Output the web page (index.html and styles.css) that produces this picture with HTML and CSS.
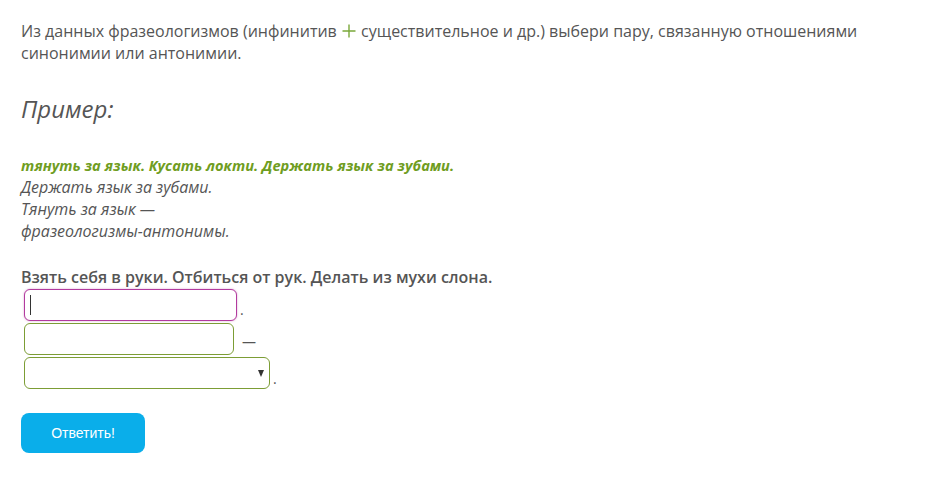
FILE: index.html
```html
<!DOCTYPE html>
<html lang="ru">
<head>
<meta charset="utf-8">
<link rel="stylesheet" href="styles.css">
</head>
<body>
<div class="task">
  <p class="question">Из данных фразеологизмов (инфинитив <svg class="plus" width="14" height="14" viewBox="0 0 14 14" aria-label="+"><path d="M7 0.5V13.5M0.5 7H13.5" stroke="#7aa83a" stroke-width="1.4" fill="none"/></svg> существительное и др.) выбери пару, связанную отношениями синонимии или антонимии.</p>
  <h2 class="example-title">Пример:</h2>
  <div class="example">
    <div class="example-src">тянуть за язык. Кусать локти. Держать язык за зубами.</div>
    <div>Держать язык за зубами.</div>
    <div>Тянуть за язык —</div>
    <div>фразеологизмы-антонимы.</div>
  </div>
  <div class="prompt">Взять себя в руки. Отбиться от рук. Делать из мухи слона.</div>
  <div class="answers">
    <div class="row"><div class="focus-wrap"><input class="field field-focus" type="text"><span class="caret"></span></div><span class="punct dot">.</span></div>
    <div class="row"><input class="field field-2" type="text"><span class="punct dash">—</span></div>
    <div class="row"><div class="select"><span class="arrow"></span></div><span class="punct dot2">.</span></div>
  </div>
  <button class="submit">Ответить!</button>
</div>
</body>
</html>
```
FILE: styles.css
```css
html, body { margin: 0; padding: 0; background: #fff; }
body { font-family: "Open Sans", "DejaVu Sans", sans-serif; color: #555; }
.task { padding: 20px 0 0 21px; }
.question { margin: 0; font-size: 16px; line-height: 22px; width: 880px; }
.plus { vertical-align: -1px; margin: 0 1px; }
.example-title { margin: 30px 0 0; font-size: 24px; font-style: italic; font-weight: 400; line-height: 30px; }
.example { margin-top: 30px; font-size: 16px; line-height: 22px; font-style: italic; }
.example-src { color: #6f9d22; font-weight: 700; font-size: 14.6px; }
.prompt { margin-top: 24px; font-size: 16px; font-weight: 600; line-height: 22px; }
.answers { display: flex; flex-direction: column; gap: 2px; margin-top: 1px; padding-left: 3px; }
.row { display: flex; align-items: center; }
.focus-wrap { position: relative; display: flex; }
.caret { position: absolute; left: 6px; top: 6px; width: 1px; height: 20px; background: #333; }
.field { box-sizing: border-box; height: 32px; border-radius: 6px; border: 1px solid #7c9d35; background: #fff; padding: 0 6px; margin: 0; font: inherit; outline: none; }
.field-focus { width: 213px; border-color: #b23a9e; box-shadow: 0 0 2px rgba(178,58,158,0.5); }
.field-2 { width: 210px; }
.select { box-sizing: border-box; width: 246px; height: 32px; border: 1px solid #7c9d35; border-radius: 6px; position: relative; background: #fff; }
.arrow { position: absolute; right: 5px; top: 12px; width: 0; height: 0; border-left: 3.5px solid transparent; border-right: 3.5px solid transparent; border-top: 7px solid #333; }
.punct { color: #555; font-size: 14px; }
.dot { margin-left: 3px; margin-top: 8px; }
.dash { margin-left: 8px; margin-top: 4px; }
.dot2 { margin-left: 3px; margin-top: 10px; }
.submit { display: block; margin-top: 24px; width: 124px; height: 40px; border: 0; border-radius: 8px; background: #0aaeea; color: #fff; font-family: "Liberation Sans", Arial, sans-serif; font-size: 14px; cursor: pointer; }
```
